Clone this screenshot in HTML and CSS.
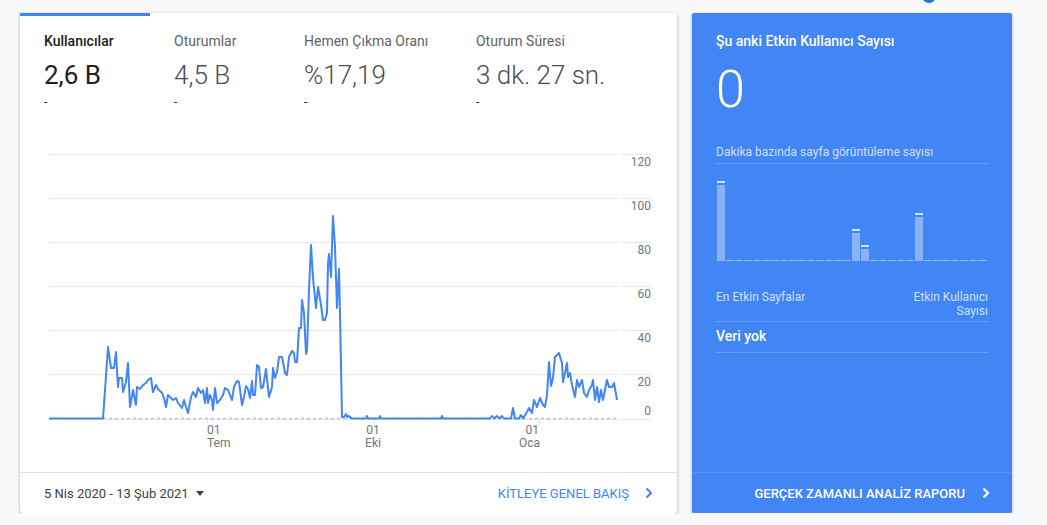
FILE: index.html
```html
<!DOCTYPE html>
<html lang="tr">
<head>
<meta charset="utf-8">
<title>Analytics</title>
<link rel="stylesheet" href="styles.css">
</head>
<body>
<div class="top-dot"></div>
<div class="page">
  <section class="card main-card">
    <div class="tab-indicator"></div>
    <div class="metrics">
      <div class="metric selected">
        <div class="metric-label">Kullanıcılar</div>
        <div class="metric-value">2,6 B</div>
        <div class="metric-delta">-</div>
      </div>
      <div class="metric">
        <div class="metric-label">Oturumlar</div>
        <div class="metric-value">4,5 B</div>
        <div class="metric-delta">-</div>
      </div>
      <div class="metric">
        <div class="metric-label">Hemen Çıkma Oranı</div>
        <div class="metric-value">%17,19</div>
        <div class="metric-delta">-</div>
      </div>
      <div class="metric">
        <div class="metric-label">Oturum Süresi</div>
        <div class="metric-value">3 dk. 27 sn.</div>
        <div class="metric-delta">-</div>
      </div>
    </div>
    <svg class="chart" width="657" height="332" viewBox="20 140 657 332" xmlns="http://www.w3.org/2000/svg">
      <g class="grid">
        <line x1="49" y1="154.5" x2="617" y2="154.5"/><line x1="621" y1="154.5" x2="651" y2="154.5"/>
        <line x1="49" y1="198.5" x2="617" y2="198.5"/><line x1="621" y1="198.5" x2="651" y2="198.5"/>
        <line x1="49" y1="242.5" x2="617" y2="242.5"/><line x1="621" y1="242.5" x2="651" y2="242.5"/>
        <line x1="49" y1="286.5" x2="617" y2="286.5"/><line x1="621" y1="286.5" x2="651" y2="286.5"/>
        <line x1="49" y1="330.5" x2="617" y2="330.5"/><line x1="621" y1="330.5" x2="651" y2="330.5"/>
        <line x1="49" y1="374.5" x2="617" y2="374.5"/><line x1="621" y1="374.5" x2="651" y2="374.5"/>
        <line x1="49" y1="419.5" x2="617" y2="419.5"/><line x1="621" y1="419.5" x2="651" y2="419.5"/>
        <line x1="207.5" y1="419" x2="207.5" y2="424"/>
        <line x1="373.5" y1="419" x2="373.5" y2="424"/>
        <line x1="539.5" y1="419" x2="539.5" y2="424"/>
      </g>
      <g class="axis-labels">
        <text x="651" y="166" text-anchor="end">120</text>
        <text x="651" y="210" text-anchor="end">100</text>
        <text x="651" y="254" text-anchor="end">80</text>
        <text x="651" y="298" text-anchor="end">60</text>
        <text x="651" y="342" text-anchor="end">40</text>
        <text x="651" y="386" text-anchor="end">20</text>
        <text x="651" y="415" text-anchor="end">0</text>
        <text x="207" y="434">01</text>
        <text x="207" y="447">Tem</text>
        <text x="373" y="434" text-anchor="middle">01</text>
        <text x="373" y="447" text-anchor="middle">Eki</text>
        <text x="539" y="434" text-anchor="end">01</text>
        <text x="540" y="447" text-anchor="end">Oca</text>
      </g>
      <line class="zero-line" x1="103" y1="418.5" x2="617" y2="418.5"/>
      <polyline class="series" points="49,418.5 103,418.5 108,347 111,368 114,368 116,352 118,387 119,378 122,378 123,392 126,382 128,363 130,407 133,390 136,405 137,387 140,389 143,385 146,383 148,380 151,378 153,392 156,385 158,389 162,393 164,398 166,407 168,395 171,398 173,400 176,398 178,403 182,408 184,400 186,407 188,413 191,397 193,392 196,397 198,388 201,393 203,390 205,403 207,388 208,403 210,395 212,400 213,410 215,388 217,403 220,400 223,395 225,388 228,390 232,400 234,387 237,381 239,382 242,405 244,397 246,386 248,389 250,398 252,381 253,395 255,395 257,365 259,367 261,388 263,387 266,369 269,397 272,387 273,368 275,378 277,372 279,357 282,357 285,373 287,375 289,357 292,351 294,353 295,362 297,362 299,328 301,328 302,300 304,313 306,354 307,351 309,290 311,245 313,278 316,308 318,287 321,305 323,320 325,320 327,313 328,263 329,254 331,277 333,216 335,247 337,308 339,269 340,313 342,417 344,417 346,414 347,417 349,416 352,418.5 366,418.5 367,416 368,418.5 379,418.5 380,416 381,418.5 441,418.5 442,416 443,418.5 490,418.5 492,416 494,418.5 497,416 499,418.5 502,416 504,418.5 511,418.5 513,408 515,418.5 519,418.5 521,415 523,418.5 527,412 529,408 532,413 534,400 537,407 540,398 543,405 545,407 547,395 549,362 551,386 553,378 555,357 557,355 559,353 562,363 563,382 565,373 567,363 568,377 570,373 572,385 575,397 577,380 579,387 582,380 584,393 587,397 589,390 592,385 593,380 595,400 597,387 599,402 601,390 603,400 605,390 607,380 609,387 612,387 614,383 617,400"/>
    </svg>
    <div class="card-footer">
      <div class="date-range">5 Nis 2020 - 13 Şub 2021<span class="caret"></span></div>
      <a class="footer-link">KİTLEYE GENEL BAKIŞ
        <svg class="chevron" width="8" height="12" viewBox="0 0 8 12"><path d="M1.5 1.5 L6 6 L1.5 10.5"/></svg>
      </a>
    </div>
  </section>

  <section class="card realtime-card">
    <div class="rt-body">
      <div class="rt-title">Şu anki Etkin Kullanıcı Sayısı</div>
      <div class="rt-count">0</div>
      <div class="rt-subtitle">Dakika bazında sayfa görüntüleme sayısı</div>
      <div class="rt-bars">
        <div class="bar filled"><span class="cap"></span><span class="body" style="height:76px"></span></div>
        <div class="bar"></div><div class="bar"></div><div class="bar"></div><div class="bar"></div><div class="bar"></div>
        <div class="bar"></div><div class="bar"></div><div class="bar"></div><div class="bar"></div><div class="bar"></div>
        <div class="bar"></div><div class="bar"></div><div class="bar"></div><div class="bar"></div>
        <div class="bar filled"><span class="cap"></span><span class="body" style="height:28px"></span></div>
        <div class="bar filled"><span class="cap"></span><span class="body" style="height:12px"></span></div>
        <div class="bar"></div><div class="bar"></div><div class="bar"></div><div class="bar"></div><div class="bar"></div>
        <div class="bar filled"><span class="cap"></span><span class="body" style="height:44px"></span></div>
        <div class="bar"></div><div class="bar"></div><div class="bar"></div><div class="bar"></div><div class="bar"></div>
        <div class="bar"></div><div class="bar"></div>
      </div>
      <div class="rt-table-head">
        <span>En Etkin Sayfalar</span>
        <span class="rt-col-right">Etkin Kullanıcı Sayısı</span>
      </div>
      <div class="rt-empty">Veri yok</div>
    </div>
    <div class="rt-footer">
      <a class="rt-link">GERÇEK ZAMANLI ANALİZ RAPORU</a>
      <svg class="chevron white" width="8" height="12" viewBox="0 0 8 12"><path d="M1.5 1.5 L6 6 L1.5 10.5"/></svg>
    </div>
  </section>
</div>
</body>
</html>
```

FILE: styles.css
```css
* { box-sizing: border-box; }

html, body {
  margin: 0;
  padding: 0;
  background: #f8f9fa;
  font-family: Roboto, "Noto Sans", Arial, sans-serif;
  overflow: hidden;
}

.top-dot {
  position: absolute;
  left: 922px;
  top: -11px;
  width: 14px;
  height: 14px;
  border-radius: 50%;
  background: #1a73e8;
}

.page {
  display: flex;
  gap: 15px;
  padding: 13px 0 0 20px;
}

.card {
  height: 500px;
  border-radius: 2px;
  box-shadow: 0 1px 2px 0 rgba(60, 64, 67, 0.3), 0 1px 3px 1px rgba(60, 64, 67, 0.15);
  display: flex;
  flex-direction: column;
}

/* ---------- main card ---------- */
.main-card {
  width: 657px;
  background: #fff;
}

.tab-indicator {
  width: 130px;
  height: 3px;
  background: #4285f4;
}

.metrics {
  display: flex;
  padding: 17px 24px 0;
}

.metric {
  min-width: 82px;
  margin-right: 48px;
  color: #5f6368;
}

.metric-label {
  font-size: 14px;
  line-height: 16px;
  white-space: nowrap;
}

.metric-value {
  margin-top: 11px;
  font-size: 26px;
  line-height: 30px;
  font-weight: 300;
  color: #4a4e52;
  white-space: nowrap;
}

.metric-delta {
  margin-top: 5px;
  font-size: 12px;
  line-height: 14px;
  color: #202124;
}

.metric.selected { color: #202124; }
.metric.selected .metric-label { font-weight: 500; }
.metric.selected .metric-value { font-weight: 400; color: #202124; }

.chart {
  display: block;
  margin-top: 31px;
}

.grid line {
  stroke: #e6e6e6;
  stroke-width: 1;
}

.axis-labels text {
  font-family: Roboto, Arial, sans-serif;
  font-size: 12px;
  fill: #70757a;
}

.zero-line {
  stroke: #a6c5fa;
  stroke-width: 1.5;
  stroke-dasharray: 3 3;
}

.series {
  fill: none;
  stroke: #4285f4;
  stroke-width: 2;
  stroke-linejoin: round;
}

.card-footer {
  height: 41px;
  border-top: 1px solid #e0e0e0;
  display: flex;
  align-items: center;
  justify-content: space-between;
  padding: 0 24px;
}

.date-range {
  font-size: 13px;
  color: #3c4043;
  display: flex;
  align-items: center;
}

.caret {
  display: inline-block;
  margin-left: 7px;
  width: 0;
  height: 0;
  border-left: 4px solid transparent;
  border-right: 4px solid transparent;
  border-top: 5px solid #3c4043;
}

.footer-link {
  font-size: 13px;
  color: #4285f4;
  display: flex;
  align-items: center;
  gap: 16px;
}

.chevron path {
  fill: none;
  stroke: #4285f4;
  stroke-width: 2;
}

.chevron.white path { stroke: #fff; stroke-width: 2.2; }

/* ---------- realtime card ---------- */
.realtime-card {
  width: 320px;
  background: #4285f4;
  color: #fff;
}

.rt-body {
  padding: 20px 24px 0;
}

.rt-title {
  font-size: 14px;
  line-height: 16px;
  font-weight: 500;
}

.rt-count {
  margin-top: 11px;
  font-size: 52px;
  line-height: 60px;
  font-weight: 300;
}

.rt-subtitle {
  margin-top: 25px;
  font-size: 12px;
  line-height: 14px;
  color: rgba(255, 255, 255, 0.75);
  padding-bottom: 4px;
  border-bottom: 1px solid rgba(255, 255, 255, 0.2);
}

.rt-bars {
  height: 97px;
  display: flex;
  align-items: flex-end;
  gap: 1px;
  padding-left: 1px;
}

.bar {
  width: 8px;
  height: 1px;
  background: rgba(255, 255, 255, 0.45);
}

.bar.filled {
  height: auto;
  background: none;
  display: flex;
  flex-direction: column;
  gap: 2px;
}

.bar .cap {
  height: 2px;
  background: rgba(255, 255, 255, 0.78);
}

.bar .body {
  background: rgba(255, 255, 255, 0.38);
}

.rt-table-head {
  margin-top: 29px;
  display: flex;
  justify-content: space-between;
  align-items: flex-start;
  font-size: 12px;
  line-height: 14px;
  color: rgba(255, 255, 255, 0.75);
  padding-bottom: 3px;
  border-bottom: 1px solid rgba(255, 255, 255, 0.2);
}

.rt-col-right {
  width: 80px;
  text-align: right;
}

.rt-empty {
  font-size: 14px;
  line-height: 16px;
  font-weight: 500;
  padding: 6px 0 8px;
  border-bottom: 1px solid rgba(255, 255, 255, 0.2);
}

.rt-footer {
  margin-top: auto;
  height: 41px;
  border-top: 1px solid rgba(255, 255, 255, 0.12);
  display: flex;
  align-items: center;
  justify-content: flex-end;
  gap: 17px;
  padding-right: 22px;
}

.rt-link {
  font-size: 13px;
  font-weight: 500;
  color: #fff;
}
```
